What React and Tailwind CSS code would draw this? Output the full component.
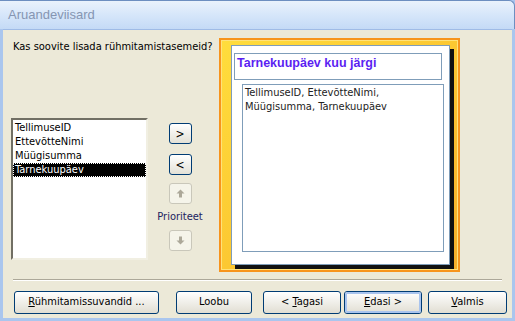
import React from 'react';

const font = { fontFamily: '"DejaVu Sans Condensed", "Liberation Sans", Arial, sans-serif' };

function SmallButton({ children, disabled }) {
    return (
        <div
            className={`w-[23px] h-[21px] rounded-[3px] border flex items-center justify-center text-[12px] leading-none ${
                disabled
                    ? 'border-[#c9c7ba] bg-[#f5f4ea] text-[#aca899]'
                    : 'border-[#003c74] bg-gradient-to-b from-white to-[#e3e1d6] text-black'
            }`}
        >
            {children}
        </div>
    );
}

function ArrowUp({ down }) {
    return (
        <svg width="9" height="9" viewBox="0 0 9 9" className={down ? 'rotate-180' : ''}>
            <path d="M4.5 0.5 L8.5 4.5 L6 4.5 L6 8.5 L3 8.5 L3 4.5 L0.5 4.5 Z" fill="#aca899" />
        </svg>
    );
}

function WizardButton({ children, focused, width }) {
    return (
        <div
            className={`${width} h-[23px] rounded-[3px] border border-[#003c74] bg-gradient-to-b from-white to-[#e1ded3] flex items-center justify-center text-[11px] text-black`}
        >
            <div
                className={`w-full h-full flex items-center justify-center rounded-[2px] ${
                    focused ? 'border-2 border-[#a9c4ee]' : ''
                }`}
            >
                {children}
            </div>
        </div>
    );
}

export default function App() {
    const fields = ['TellimuseID', 'EttevõtteNimi', 'Müügisumma', 'Tarnekuupäev'];

    return (
        <div className="w-[515px] h-[321px] flex flex-col bg-[#aac6ee] overflow-hidden" style={font}>
            {/* Title bar */}
            <div className="h-[29px] shrink-0 border-t border-r border-[#6d8ec0] rounded-tr-[6px] bg-gradient-to-b from-[#eaf2fc] via-[#d6e6fa] to-[#c4daf6] flex items-center pl-[8px]">
                <span className="text-[13px] text-[#8595b2]" style={{ fontFamily: '"Liberation Sans", Arial, sans-serif' }}>
                    Aruandeviisard
                </span>
            </div>

            {/* Body */}
            <div className="flex-1 ml-[3px] mr-[3px] mb-[3px] bg-[#ece9d8] flex flex-col border-t border-[#9fbbe6]">
                <div className="flex h-[242px]">
                    {/* Left column */}
                    <div className="w-[216px] shrink-0 pl-[10px] flex flex-col">
                        <div className="mt-[10px] text-[11px] text-black leading-[13px]">
                            Kas soovite lisada rühmitamistasemeid?
                        </div>
                        <div className="flex mt-[65px] -ml-[2px]">
                            <div className="w-[137px] h-[142px] bg-white border-2 border-t-[#716f64] border-l-[#716f64] border-r-[#f1efe2] border-b-[#f1efe2] pt-[1px] text-[11px] leading-[14px] text-black">
                                {fields.map((f, i) => (
                                    <div
                                        key={f}
                                        className={`pl-[2px] h-[14px] ${
                                            i === 3 ? 'bg-black text-white outline-1 outline-dotted outline-offset-[-1px] outline-white' : ''
                                        }`}
                                    >
                                        {f}
                                    </div>
                                ))}
                            </div>
                            <div className="w-[64px] flex flex-col items-center pt-[5px]">
                                <SmallButton>&gt;</SmallButton>
                                <div className="h-[10px]" />
                                <SmallButton>&lt;</SmallButton>
                                <div className="h-[8px]" />
                                <SmallButton disabled>
                                    <ArrowUp />
                                </SmallButton>
                                <div className="text-[11px] text-[#21215f] leading-[13px] mt-[6px] mb-[7px]">Prioriteet</div>
                                <SmallButton disabled>
                                    <ArrowUp down />
                                </SmallButton>
                            </div>
                        </div>
                    </div>

                    {/* Preview */}
                    <div className="mt-[8px] w-[241px] h-[234px] border border-[#f7941d] p-[1px] bg-[#f7941d]">
                        <div className="w-full h-full border border-[#ffe27a] bg-gradient-to-br from-[#ffdd3c] via-[#fcc832] to-[#f8b02a] pl-[9px] pt-[4px]">
                            <div className="relative w-[219px] h-[220px]">
                                <div className="absolute left-[4px] top-[4px] w-[219px] h-[220px] bg-[#111]" />
                                <div className="relative w-[219px] h-[220px] bg-white border border-[#7f9db9] pl-[2px] pt-[7px]">
                                    <div
                                        className="w-[208px] h-[27px] border border-[#7f9db9] pl-[2px] pt-[2px] text-[12.5px] font-bold text-[#5b1ff2] leading-[15px]"
                                        style={{ fontFamily: '"Liberation Sans", Arial, sans-serif' }}
                                    >
                                        Tarnekuupäev kuu järgi
                                    </div>
                                    <div className="ml-[8px] mt-[4px] w-[202px] h-[168px] border border-[#7f9db9] px-[2px] pt-[1px] text-[11px] leading-[14px] text-[#222]">
                                        TellimuseID, EttevõtteNimi,
                                        <br />
                                        Müügisumma, Tarnekuupäev
                                    </div>
                                </div>
                            </div>
                        </div>
                    </div>
                </div>

                {/* Separator */}
                <div className="mx-[10px] mt-[7px] h-[2px] border-t border-[#aca899] border-b border-b-white" />

                {/* Buttons */}
                <div className="flex items-center mt-[10px] pl-[11px]">
                    <WizardButton width="w-[145px]">
                        <span><span className="underline">R</span>ühmitamissuvandid ...</span>
                    </WizardButton>
                    <div className="w-[17px]" />
                    <WizardButton width="w-[76px]">Loobu</WizardButton>
                    <div className="w-[11px]" />
                    <WizardButton width="w-[78px]">
                        <span>&lt; <span className="underline">T</span>agasi</span>
                    </WizardButton>
                    <div className="w-[3px]" />
                    <WizardButton width="w-[78px]" focused>
                        <span><span className="underline">E</span>dasi &gt;</span>
                    </WizardButton>
                    <div className="w-[6px]" />
                    <WizardButton width="w-[79px]">
                        <span><span className="underline">V</span>almis</span>
                    </WizardButton>
                </div>
            </div>
        </div>
    );
}
